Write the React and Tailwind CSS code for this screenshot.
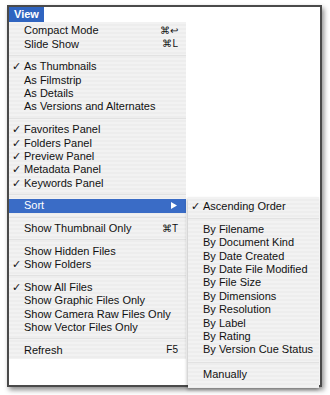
import React from 'react';

const mainItems = [
  { label: 'Compact Mode', key: '⌘↩' },
  { label: 'Slide Show', key: '⌘L' },
  'sep',
  { label: 'As Thumbnails', checked: true },
  { label: 'As Filmstrip' },
  { label: 'As Details' },
  { label: 'As Versions and Alternates' },
  'sep',
  { label: 'Favorites Panel', checked: true },
  { label: 'Folders Panel', checked: true },
  { label: 'Preview Panel', checked: true },
  { label: 'Metadata Panel', checked: true },
  { label: 'Keywords Panel', checked: true },
  'sep',
  { label: 'Sort', active: true, submenu: true },
  'sep',
  { label: 'Show Thumbnail Only', key: '⌘T' },
  'sep',
  { label: 'Show Hidden Files' },
  { label: 'Show Folders', checked: true },
  'sep',
  { label: 'Show All Files', checked: true },
  { label: 'Show Graphic Files Only' },
  { label: 'Show Camera Raw Files Only' },
  { label: 'Show Vector Files Only' },
  'sep',
  { label: 'Refresh', key: 'F5' }
];

const sortItems = [
  { label: 'Ascending Order', checked: true },
  'sep',
  { label: 'By Filename' },
  { label: 'By Document Kind' },
  { label: 'By Date Created' },
  { label: 'By Date File Modified' },
  { label: 'By File Size' },
  { label: 'By Dimensions' },
  { label: 'By Resolution' },
  { label: 'By Label' },
  { label: 'By Rating' },
  { label: 'By Version Cue Status' },
  'tallsep',
  { label: 'Manually' }
];

const Row = ({ item }) => (
  <div
    className={`flex h-[13.4px] items-center pr-[8px] pl-[3px] ${
      item.active ? 'bg-[#3a6cc6] text-white' : 'text-[#111]'
    }`}
  >
    <span className="w-[12px] shrink-0 text-[11px] leading-none">{item.checked ? '✓' : ''}</span>
    <span className="flex-1 whitespace-nowrap">{item.label}</span>
    {item.key && <span className="text-[10px] whitespace-nowrap">{item.key}</span>}
    {item.submenu && (
      <svg width="6" height="7" viewBox="0 0 6 7" className="mr-[1px]">
        <path d="M0 0 L6 3.5 L0 7 Z" fill="white" />
      </svg>
    )}
  </div>
);

const Menu = ({ items, className }) => (
  <div
    className={`bg-[repeating-linear-gradient(180deg,#f2f2f2_0px,#f2f2f2_2px,#ededed_2px,#ededed_4px)] ${className}`}
  >
    {items.map((item, i) =>
      item === 'sep' || item === 'tallsep' ? (
        <div
          key={i}
          className={`flex items-center ${item === 'tallsep' ? 'h-[11.5px]' : 'h-[9.3px]'}`}
        >
          <div className="h-px w-full bg-[#e2e2e2]" />
        </div>
      ) : (
        <Row key={i} item={item} />
      )
    )}
  </div>
);

export default function App() {
  return (
    <div
      className="h-[395px] w-[330px] bg-white pt-[5px] pl-[7px] text-[11px] leading-none"
      style={{ fontFamily: '"Liberation Sans", Arial, sans-serif' }}
    >
      <div className="relative h-[382px] w-[315px] border-2 border-[#4a4a4a] bg-white shadow-[2px_3px_5px_rgba(0,0,0,0.45)]">
        <div className="flex h-[15px] w-[35px] items-center bg-[#2f64c0] pl-[5px] font-bold text-white">
          View
        </div>
        <Menu items={mainItems} className="w-[177px] pt-[2px] pb-[2px]" />
        <Menu
          items={sortItems}
          className="absolute top-[190px] left-[179px] w-[131px] pt-[3px] pb-[7px] shadow-[-1px_2px_3px_rgba(0,0,0,0.25)]"
        />
      </div>
    </div>
  );
}
